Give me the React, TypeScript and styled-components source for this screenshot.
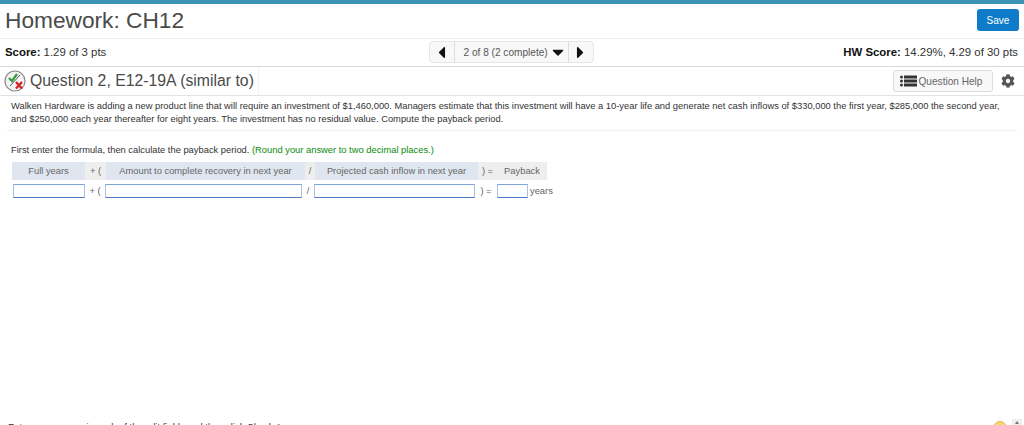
import styled, { createGlobalStyle } from 'styled-components';
import { FaCog, FaCaretDown, FaCaretLeft, FaCaretRight } from 'react-icons/fa';

const GlobalStyle = createGlobalStyle`
  html, body {
    margin: 0;
    padding: 0;
    background: #fff;
    overflow: hidden;
  }
  body {
    font-family: "Liberation Sans", Arial, sans-serif;
  }
  * {
    box-sizing: border-box;
  }
`;

function ScoreIcon() {
  return (
    <svg width="22" height="22" viewBox="0 0 22 22">
      <circle cx="11" cy="11" r="10" fill="#f4f4f4" stroke="#8a8a8a" strokeWidth="1.2" />
      <line x1="6" y1="16" x2="16" y2="5" stroke="#555" strokeWidth="1" />
      <path d="M5 8 L8 11 L13 4" fill="none" stroke="#2f9e3f" strokeWidth="2.2" />
      <path d="M12 12 L18 18.5 M18 12 L12 18.5" fill="none" stroke="#d42027" strokeWidth="2.4" />
    </svg>
  );
}

function ListIcon() {
  return (
    <svg width="17" height="12" viewBox="0 0 17 12" fill="#333">
      <circle cx="1.5" cy="2" r="1.5" />
      <circle cx="1.5" cy="6" r="1.5" />
      <circle cx="1.5" cy="10" r="1.5" />
      <rect x="4" y="0.5" width="13" height="3" />
      <rect x="4" y="4.5" width="13" height="3" />
      <rect x="4" y="8.5" width="13" height="3" />
    </svg>
  );
}

export default function App() {
  return (
    <Page>
      <GlobalStyle />
      <TopBar />
      <Header>
        <Title>Homework: CH12</Title>
        <SaveButton>Save</SaveButton>
      </Header>
      <ScoreRow>
        <Score>
          <b>Score:</b> 1.29 of 3 pts
        </Score>
        <Pager>
          <PagerArrow>
            <FaCaretLeft size={19} />
          </PagerArrow>
          <PagerLabel>
            2 of 8 (2 complete)
            <FaCaretDown size={18} />
          </PagerLabel>
          <PagerArrow>
            <FaCaretRight size={19} />
          </PagerArrow>
        </Pager>
        <HwScore>
          <b>HW Score:</b> 14.29%, 4.29 of 30 pts
        </HwScore>
      </ScoreRow>
      <QuestionRow>
        <QuestionTitle>
          <ScoreIcon />
          Question 2, E12-19A (similar to)
        </QuestionTitle>
        <QuestionTools>
          <HelpButton>
            <ListIcon />
            Question Help
          </HelpButton>
          <FaCog size={14} color="#555" />
        </QuestionTools>
      </QuestionRow>
      <Problem>
        Walken Hardware is adding a new product line that will require an investment of $1,460,000. Managers estimate that this investment will have a 10-year life and generate net cash inflows of $330,000 the first year, $285,000 the second year, and $250,000 each year thereafter for eight years. The investment has no residual value. Compute the payback period.
      </Problem>
      <Instruction>
        First enter the formula, then calculate the payback period. <Hint>(Round your answer to two decimal places.)</Hint>
      </Instruction>
      <HeadRow>
        <Head>Full years</Head>
        <Op>+ (</Op>
        <Head>Amount to complete recovery in next year</Head>
        <Op>/</Op>
        <Head>Projected cash inflow in next year</Head>
        <Op>) =</Op>
        <Head $plain>Payback</Head>
      </HeadRow>
      <InputRow>
        <Field />
        <InputOp>+ (</InputOp>
        <Field />
        <InputOp>/</InputOp>
        <Field />
        <InputOp>) =</InputOp>
        <Field />
        <Unit>years</Unit>
      </InputRow>
      <Footer>
        <FooterText>Enter your answer in each of the edit fields and then click Check Answer.</FooterText>
        <FooterTools>
          <Bulb />
          <Scroll />
        </FooterTools>
      </Footer>
    </Page>
  );
}

const Page = styled.div`
  height: 425px;
  overflow: hidden;
  display: flex;
  flex-direction: column;
  color: #333;
`;

const TopBar = styled.div`
  height: 4px;
  background: #3b93b5;
`;

const Header = styled.div`
  height: 35px;
  padding: 0 5px 0 5px;
  display: flex;
  align-items: center;
  justify-content: space-between;
  border-bottom: 1px solid #eee;
`;

const Title = styled.h1`
  margin: -2px 0 0;
  font-size: 22.7px;
  font-weight: 400;
  color: #4a4a4a;
`;

const SaveButton = styled.button`
  width: 42px;
  height: 22px;
  margin-top: -2px;
  padding: 0;
  border: none;
  border-radius: 3px;
  background: #0f7cc9;
  color: #fff;
  font: 10px "Liberation Sans", Arial, sans-serif;
`;

const ScoreRow = styled.div`
  height: 28px;
  padding: 0 6px 1px 5px;
  display: grid;
  grid-template-columns: 1fr auto 1fr;
  align-items: center;
  font-size: 11.4px;
  border-bottom: 1px solid #d3dbe4;
`;

const Score = styled.div`
  color: #333;
  b {
    color: #111;
  }
`;

const HwScore = styled(Score)`
  text-align: right;
`;

const Pager = styled.div`
  width: 165px;
  height: 22px;
  margin-right: 1px;
  display: flex;
  align-items: stretch;
  border: 1px solid #e6e6e6;
  border-radius: 4px;
  background: #f8f8f8;
`;

const PagerArrow = styled.div`
  width: 24px;
  display: flex;
  align-items: center;
  justify-content: center;
  color: #111;
`;

const PagerLabel = styled.div`
  flex: 1;
  padding-left: 9px;
  display: flex;
  align-items: center;
  gap: 1px;
  font-size: 10.1px;
  color: #555;
  border-left: 1px solid #ddd;
  border-right: 1px solid #ddd;
  svg {
    color: #111;
  }
`;

const QuestionRow = styled.div`
  height: 29px;
  padding: 0 9px 0 4px;
  display: flex;
  align-items: stretch;
  justify-content: space-between;
  border-bottom: 1px solid #dfe3e8;
`;

const QuestionTitle = styled.div`
  width: 255px;
  display: flex;
  align-items: center;
  gap: 4px;
  font-size: 15.8px;
  color: #4a4a4a;
  border-right: 1px solid #f2f2f2;
`;

const QuestionTools = styled.div`
  display: flex;
  align-items: center;
  gap: 8px;
`;

const HelpButton = styled.button`
  width: 100px;
  height: 22px;
  padding: 0 4px 0 0;
  display: flex;
  align-items: center;
  justify-content: center;
  gap: 2px;
  border: 1px solid #ddd;
  border-radius: 3px;
  background: #f8f8f8;
  color: #666;
  font: 10.1px "Liberation Sans", Arial, sans-serif;
`;

const Problem = styled.p`
  margin: 0 7px;
  padding: 4px 14px 4px 4px;
  font-size: 9.36px;
  line-height: 13px;
  color: #333;
  border-bottom: 1px solid #f1f1f1;
`;

const Instruction = styled.div`
  margin: 13px 0 0 11px;
  font-size: 9.36px;
  line-height: 12px;
  color: #333;
`;

const Hint = styled.span`
  color: #0a8a0a;
`;

const HeadRow = styled.div`
  margin: 6px 0 0 12px;
  display: grid;
  grid-template-columns: 73px 21px 199px 10px 163px 19px 50px;
  width: max-content;
  font-size: 9.36px;
  color: #666;
`;

const Head = styled.div<{ $plain?: boolean }>`
  height: 18px;
  line-height: 18px;
  text-align: center;
  background: ${(p) => (p.$plain ? '#eeeeee' : '#dfe6f0')};
`;

const Op = styled.div`
  height: 18px;
  line-height: 19px;
  text-align: center;
  background: #eeeeee;
`;

const InputRow = styled.div`
  margin: 4px 0 0 13px;
  display: grid;
  grid-template-columns: 72px 20px 197px 12px 161px 22px 31px auto;
  align-items: center;
  font-size: 9.36px;
  color: #666;
`;

const InputOp = styled.div`
  text-align: center;
`;

const Field = styled.div`
  height: 14px;
  border: 1px solid #a9c2e6;
  border-top-color: #7ea3d8;
  border-bottom-color: #4c7cc4;
  background: #fff;
`;

const Unit = styled.div`
  margin-left: 2px;
`;

const Footer = styled.div`
  margin-top: auto;
  height: 6px;
  padding: 0 2px 0 8px;
  display: flex;
  justify-content: space-between;
`;

const FooterText = styled.div`
  margin-top: 2px;
  font-size: 9.36px;
  line-height: 12px;
  color: #333;
`;

const FooterTools = styled.div`
  display: flex;
  gap: 5px;
`;

const Bulb = styled.div`
  width: 14px;
  height: 14px;
  margin-top: 2px;
  border-radius: 50%;
  background: #f5d778;
  border: 1px solid #e6b94e;
`;

const Scroll = styled.div`
  width: 10px;
  height: 16px;
  padding-top: 2px;
  display: flex;
  justify-content: center;
  background: #eeeeee;
  &::after {
    content: '';
    border-left: 2px solid transparent;
    border-right: 2px solid transparent;
    border-bottom: 3px solid #777;
    height: 0;
  }
`;
